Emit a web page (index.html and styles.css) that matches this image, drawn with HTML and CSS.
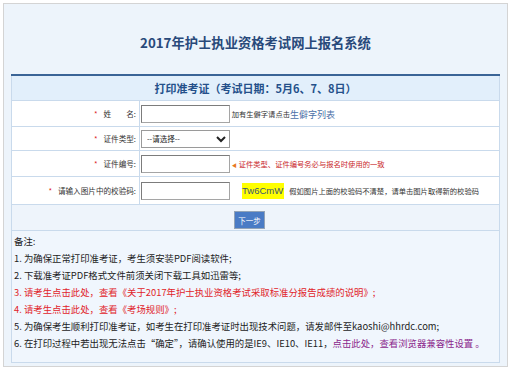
FILE: index.html
```html
<!DOCTYPE html>
<html lang="zh-CN">
<head>
  <meta charset="UTF-8">
  <title>2017年护士执业资格考试网上报名系统</title>
  <link rel="stylesheet" href="styles.css">
</head>
<body>
  <div id="page-frame">
    <h1 class="sys-title">2017年护士执业资格考试网上报名系统</h1>

    <table class="print-table">
      <colgroup>
        <col class="col-label">
        <col>
      </colgroup>
      <tr class="caption-row">
        <th colspan="2">打印准考证（考试日期：5月6、7、8日）</th>
      </tr>
      <tr class="row-name">
        <td class="label"><span class="req">*</span>姓&emsp;&emsp;名:</td>
        <td class="field">
          <input type="text" class="txt">
          <span class="tip">加有生僻字请点击</span><a class="rare-link" href="#">生僻字列表</a>
        </td>
      </tr>
      <tr class="row-type">
        <td class="label"><span class="req">*</span>证件类型:</td>
        <td class="field">
          <select class="sel">
            <option>--请选择--</option>
          </select>
        </td>
      </tr>
      <tr class="row-num">
        <td class="label"><span class="req">*</span>证件编号:</td>
        <td class="field">
          <input type="text" class="txt">
          <span class="warn"><span class="arrow">◀</span>证件类型、证件编号务必与报名时使用的一致</span>
        </td>
      </tr>
      <tr class="row-code">
        <td class="label"><span class="req">*</span>请输入图片中的校验码:</td>
        <td class="field">
          <input type="text" class="txt">
          <span class="captcha">Tw6CmW</span>
          <span class="tip">假如图片上面的校验码不清楚，请单击图片取得新的校验码</span>
        </td>
      </tr>
      <tr class="row-btn">
        <td colspan="2"><button class="next-btn">下一步</button></td>
      </tr>
      <tr class="row-notes">
        <td colspan="2">
          <p>备注:</p>
          <p>1. 为确保正常打印准考证，考生须安装PDF阅读软件;</p>
          <p>2. 下载准考证PDF格式文件前须关闭下载工具如迅雷等;</p>
          <p class="red">3. 请考生点击此处，查看《关于2017年护士执业资格考试采取标准分报告成绩的说明》;</p>
          <p class="red">4. 请考生点击此处，查看《考场规则》;</p>
          <p>5. 为确保考生顺利打印准考证，如考生在打印准考证时出现技术问题，请发邮件至kaoshi@hhrdc.com;</p>
          <p>6. 在打印过程中若出现无法点击“确定”，请确认使用的是IE9、IE10、IE11，<a class="purple" href="#">点击此处，查看浏览器兼容性设置 。</a></p>
        </td>
      </tr>
    </table>
  </div>
</body>
</html>
```

FILE: styles.css
```css
body {
  margin: 0;
  background: #fff;
  font-family: "Noto Sans CJK SC", "Liberation Sans", sans-serif;
  color: #222;
}
#page-frame {
  margin: 3px 0 0 3px;
  width: 503px;
  height: 362px;
  border: 1px solid #d4d4d4;
  background: #edf4fb;
}
.sys-title {
  margin: 0;
  padding: 29px 0 21px;
  height: 20px;
  line-height: 20px;
  text-align: center;
  font-size: 13.3px;
  font-weight: bold;
  color: #28497a;
}
.print-table {
  margin: 0 auto;
  width: 489px;
  table-layout: fixed;
  border-collapse: collapse;
  background: #fff;
}
.print-table td, .print-table th {
  padding: 0;
  border: 1px solid #c9daec;
  overflow: hidden;
}
.col-label {
  width: 128px;
}
.caption-row th {
  height: 24px;
  border-top: 2px solid #3a6496;
  background: #e2effb;
  font-size: 11px;
  font-weight: bold;
  color: #24508a;
}
.row-name td { height: 25px; }
.row-type td { height: 23px; }
.row-num td { height: 25px; }
.row-code td { height: 27px; }
.label {
  padding-right: 3px !important;
  text-align: right;
  font-size: 7.6px;
  color: #333;
  white-space: nowrap;
}
.req {
  color: #d22;
  margin-right: 6px;
}
.field {
  padding-left: 1px !important;
  font-size: 7.3px;
  white-space: nowrap;
}
.txt, .sel {
  box-sizing: border-box;
  width: 89px;
  height: 18px;
  margin: 0;
  vertical-align: middle;
  background: #fff;
}
.txt {
  border: 1px solid #a5a5a5;
  border-top-color: #7c7c7c;
  border-left-color: #7c7c7c;
}
.sel {
  border: 1px solid #9a9a9a;
  font-family: "Noto Sans CJK SC", sans-serif;
  font-size: 7.5px;
  color: #222;
  padding: 0 1px;
}
.tip {
  vertical-align: middle;
  color: #333;
}
.rare-link {
  vertical-align: middle;
  font-size: 9px;
  color: #4a70a8;
  text-decoration: none;
}
.warn {
  vertical-align: middle;
  color: #c9282b;
}
.arrow {
  font-size: 5px;
  color: #e8781c;
  margin-right: 2px;
}
.captcha {
  display: inline-block;
  width: 42px;
  height: 16px;
  line-height: 16px;
  margin: 0 4px 0 10px;
  vertical-align: middle;
  background: #ffff00;
  text-align: center;
  font-family: "Liberation Sans", sans-serif;
  font-size: 9.5px;
  color: #3a5577;
}
.row-btn td {
  height: 25px;
  padding-right: 12px;
  text-align: center;
  background: #eef4fb;
}
.next-btn {
  width: 31px;
  height: 18px;
  padding: 0;
  border: 1px solid #93a3b6;
  background: #4a7bc5;
  color: #fff;
  font-family: "Noto Sans CJK SC", sans-serif;
  font-size: 7.5px;
  vertical-align: middle;
}
.row-notes td {
  height: 125px;
  padding: 2px 2px 4px 2px;
  vertical-align: top;
  background: #f0f6fd;
  font-size: 9.4px;
  color: #1c1c1c;
}
.row-notes p {
  margin: 0;
  height: 17px;
  line-height: 17px;
  white-space: nowrap;
}
.row-notes .red {
  color: #e1242a;
}
.purple {
  color: #8a1f8c;
  text-decoration: none;
}
```
